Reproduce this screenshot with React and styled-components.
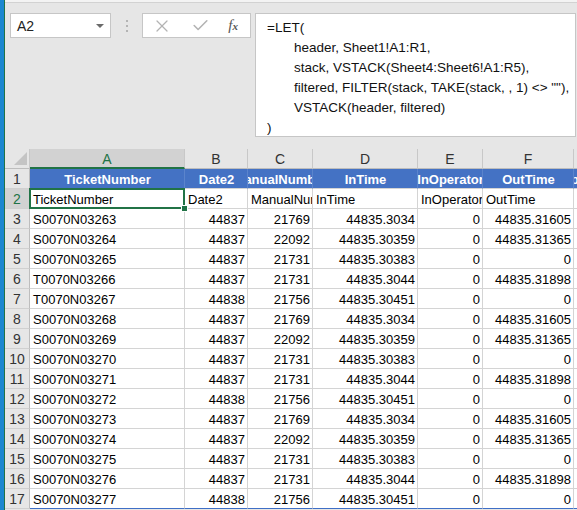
import styled, { createGlobalStyle } from 'styled-components';
import { X, Check } from 'lucide-react';

const GlobalStyle = createGlobalStyle`
  html, body {
    margin: 0;
    padding: 0;
    background: #e6e6e6;
    font-family: "Liberation Sans", Arial, sans-serif;
  }
`;

// G is only 3px wide in the shot, so its letter isn't visible
const columns = [
  { key: 'A', label: 'A' },
  { key: 'B', label: 'B' },
  { key: 'C', label: 'C' },
  { key: 'D', label: 'D' },
  { key: 'E', label: 'E' },
  { key: 'F', label: 'F' },
  { key: 'G', label: '' },
];

const headers = ['TicketNumber', 'Date2', 'ManualNumber', 'InTime', 'InOperator', 'OutTime', 'OutOperator'];

const data = [
  ['S0070N03263', 44837, 21769, '44835.3034', 0, '44835.31605'],
  ['S0070N03264', 44837, 22092, '44835.30359', 0, '44835.31365'],
  ['S0070N03265', 44837, 21731, '44835.30383', 0, 0],
  ['T0070N03266', 44837, 21731, '44835.3044', 0, '44835.31898'],
  ['T0070N03267', 44838, 21756, '44835.30451', 0, 0],
  ['S0070N03268', 44837, 21769, '44835.3034', 0, '44835.31605'],
  ['S0070N03269', 44837, 22092, '44835.30359', 0, '44835.31365'],
  ['S0070N03270', 44837, 21731, '44835.30383', 0, 0],
  ['S0070N03271', 44837, 21731, '44835.3044', 0, '44835.31898'],
  ['S0070N03272', 44838, 21756, '44835.30451', 0, 0],
  ['S0070N03273', 44837, 21769, '44835.3034', 0, '44835.31605'],
  ['S0070N03274', 44837, 22092, '44835.30359', 0, '44835.31365'],
  ['S0070N03275', 44837, 21731, '44835.30383', 0, 0],
  ['S0070N03276', 44837, 21731, '44835.3044', 0, '44835.31898'],
  ['S0070N03277', 44838, 21756, '44835.30451', 0, 0],
];

const formula = [
  { text: '=LET(', indent: false },
  { text: 'header, Sheet1!A1:R1,', indent: true },
  { text: 'stack, VSTACK(Sheet4:Sheet6!A1:R5),', indent: true },
  { text: 'filtered, FILTER(stack, TAKE(stack, , 1) <> ""),', indent: true },
  { text: 'VSTACK(header, filtered)', indent: true },
  { text: ')', indent: false },
];

function App() {
  return (
    <Frame>
      <GlobalStyle />
      <WindowEdge />
      <Main>
        <TopStrip />
        <FormulaBar>
          <NameBox>
            <span>A2</span>
            <DropArrow />
          </NameBox>
          <Grip>
            <Dot />
            <Dot />
            <Dot />
          </Grip>
          <ButtonBox>
            <X size={20} strokeWidth={1.5} color="#b3b3b3" />
            <Check size={19} strokeWidth={2} color="#b3b3b3" />
            <Fx>f<small>x</small></Fx>
          </ButtonBox>
          <FormulaBox>
            {formula.map((l, i) => (
              <FormulaLine key={i} $indent={l.indent}>{l.text}</FormulaLine>
            ))}
          </FormulaBox>
        </FormulaBar>

        <Sheet>
          <Corner />
          {columns.map((c) => (
            <ColHead key={c.key} $active={c.key === 'A'}>{c.label}</ColHead>
          ))}

          <RowHead>1</RowHead>
          {headers.map((h, i) => (
            <Cell key={i} $align="center" $banner>{h}</Cell>
          ))}

          <RowHead $active>2</RowHead>
          {headers.map((h, i) => (
            <Cell key={i} $selected={i === 0}>{h}</Cell>
          ))}

          {data.map((row, r) => {
            const last = r === data.length - 1;
            return [
              <RowHead key={`h${r}`}>{r + 3}</RowHead>,
              ...row.map((v, i) => (
                <Cell key={`${r}-${i}`} $align={i === 0 ? 'left' : 'right'} $last={last}>{v}</Cell>
              )),
              <Cell key={`${r}-g`} $last={last} />,
            ];
          })}
        </Sheet>
      </Main>
    </Frame>
  );
}

export default App;

const Frame = styled.div`
  width: 577px;
  height: 510px;
  overflow: hidden;
  display: flex;
  background: #e6e6e6;
`;

const WindowEdge = styled.div`
  width: 4px;
  flex-shrink: 0;
  background: #1c87d0;
  border-right: 1px solid #217346;
`;

const Main = styled.div`
  flex: 1;
  min-width: 0;
  display: flex;
  flex-direction: column;
`;

const TopStrip = styled.div`
  height: 3px;
  box-sizing: border-box;
  background: #f3f3f3;
  border-bottom: 1px solid #d2d2d2;
`;

const FormulaBar = styled.div`
  height: 146px;
  box-sizing: border-box;
  display: flex;
  align-items: flex-start;
  padding: 10px 1px 0 5px;
`;

const NameBox = styled.div`
  width: 101px;
  height: 25px;
  box-sizing: border-box;
  background: #fff;
  border: 1px solid #c6c6c6;
  display: flex;
  align-items: center;
  justify-content: space-between;
  padding: 0 6px 0 6px;
  font-size: 14px;
  color: #222;
`;

const DropArrow = styled.span`
  width: 0;
  height: 0;
  border-left: 4px solid transparent;
  border-right: 4px solid transparent;
  border-top: 4px solid #6a6a6a;
`;

const Grip = styled.div`
  width: 31px;
  height: 25px;
  display: flex;
  flex-direction: column;
  align-items: center;
  justify-content: center;
  gap: 3px;
`;

const Dot = styled.span`
  width: 2px;
  height: 2px;
  background: #b4b4b4;
`;

const ButtonBox = styled.div`
  width: 109px;
  height: 25px;
  box-sizing: border-box;
  background: #fff;
  border: 1px solid #c6c6c6;
  display: flex;
  align-items: center;
  justify-content: space-between;
  padding: 0 12px 0 9px;
`;

const Fx = styled.span`
  font-family: "Liberation Serif", "Times New Roman", serif;
  font-style: italic;
  font-size: 15px;
  color: #555;
  small {
    font-size: 11px;
    font-weight: bold;
  }
`;

const FormulaBox = styled.div`
  flex: 1;
  height: 124px;
  margin-left: 4px;
  box-sizing: border-box;
  background: #fff;
  border: 1px solid #c6c6c6;
  padding: 4px 0 0 11px;
  font-size: 13.5px;
  line-height: 20px;
  color: #111;
  white-space: pre;
`;

const FormulaLine = styled.div`
  padding-left: ${(p) => (p.$indent ? '27px' : '0')};
`;

const Sheet = styled.div`
  display: grid;
  grid-template-columns: 25px 155px 63px 65px 105px 65px 91px 1fr;
  grid-auto-rows: 20px;
  background: #fff;
`;

const Corner = styled.div`
  position: relative;
  background: #e6e6e6;
  border-right: 1px solid #c8c8c8;
  border-bottom: 1px solid #bdbdbd;
  &::after {
    content: '';
    position: absolute;
    right: 2px;
    bottom: 3px;
    border-left: 13px solid transparent;
    border-bottom: 13px solid #c4c4c4;
  }
`;

const ColHead = styled.div`
  box-sizing: border-box;
  background: ${(p) => (p.$active ? '#d2d2d2' : '#e6e6e6')};
  color: ${(p) => (p.$active ? '#217346' : '#333')};
  border-right: 1px solid #c8c8c8;
  border-bottom: ${(p) => (p.$active ? '2px solid #217346' : '1px solid #bdbdbd')};
  font-size: 14px;
  line-height: 20px;
  text-align: center;
  overflow: hidden;
`;

const RowHead = styled.div`
  box-sizing: border-box;
  background: ${(p) => (p.$active ? '#d2d2d2' : '#e6e6e6')};
  color: ${(p) => (p.$active ? '#217346' : '#333')};
  border-right: 1px solid #bdbdbd;
  border-bottom: 1px solid #d0d0d0;
  font-size: 14px;
  line-height: 20px;
  text-align: center;
`;

const Cell = styled.div`
  position: relative;
  box-sizing: border-box;
  display: flex;
  align-items: center;
  justify-content: ${(p) =>
    p.$align === 'center' ? 'center' : p.$align === 'right' ? 'flex-end' : 'flex-start'};
  padding: 1px 2px 0 3px;
  white-space: nowrap;
  overflow: ${(p) => (p.$selected ? 'visible' : 'hidden')};
  font-size: 13px;
  color: ${(p) => (p.$banner ? '#fff' : '#000')};
  font-weight: ${(p) => (p.$banner ? 'bold' : 'normal')};
  background: ${(p) => (p.$banner ? '#4472c4' : '#fff')};
  border-right: 1px solid ${(p) => (p.$banner ? '#5b84cc' : '#d4d4d4')};
  border-bottom: 1px solid ${(p) => (p.$last ? '#3f6fc6' : '#d4d4d4')};

  ${(p) =>
    p.$selected &&
    `
    &::after {
      content: '';
      position: absolute;
      left: -1px;
      top: -1px;
      right: -1px;
      bottom: -1px;
      border: 2px solid #217346;
      pointer-events: none;
    }
    &::before {
      content: '';
      position: absolute;
      right: -4px;
      bottom: -4px;
      width: 5px;
      height: 5px;
      background: #217346;
      border: 1px solid #fff;
      z-index: 2;
    }
  `}
`;
